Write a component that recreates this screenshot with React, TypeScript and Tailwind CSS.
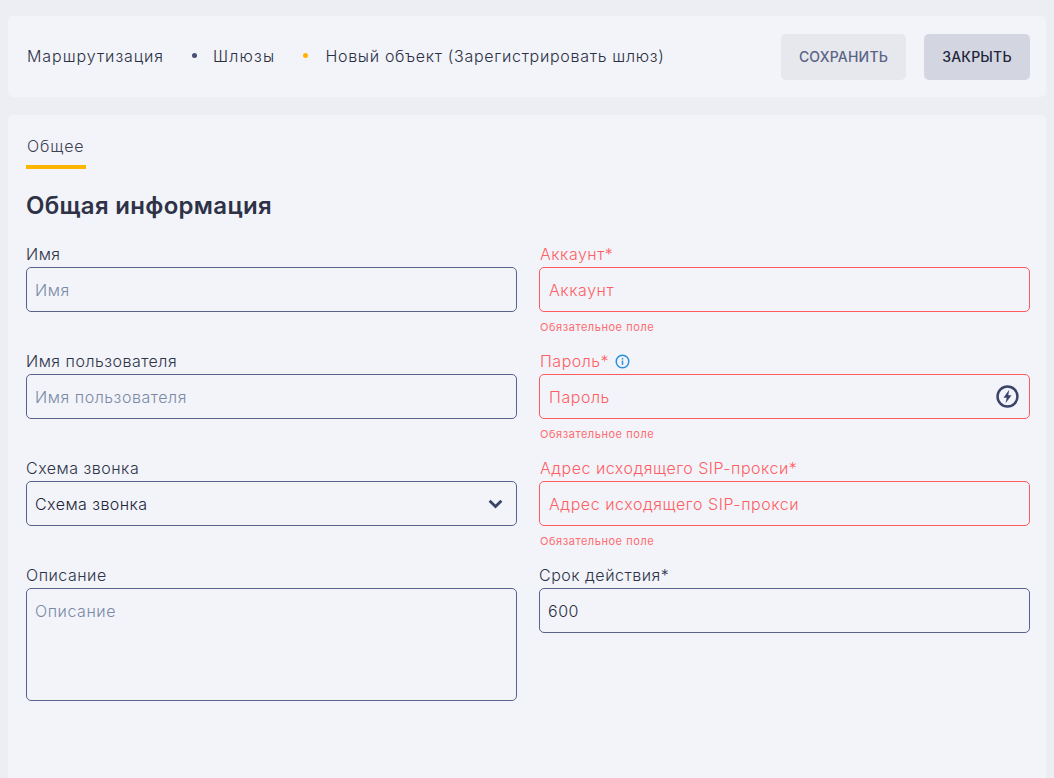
const FONT = "font-['Inter',sans-serif]";

/** Label + control wrapper shared by every form cell. */
function Field({ label, error, hint, children }: { label: string; error?: boolean; hint?: boolean; children: React.ReactNode }) {
  return (
    <div className="h-[107px]">
      <div className={`flex h-[20px] items-center gap-[6px] text-[16px] leading-[20px] font-light tracking-[0.5px] ${error ? 'pl-[1px] text-[#ff5f64]' : 'text-[#2f3348]'}`}>
        {label}
        {hint && (
          <svg viewBox="0 0 16 16" className="size-[15px]" fill="none">
            <circle cx="8" cy="8" r="6.7" stroke="#2b8fdc" strokeWidth="1.6" />
            <rect x="7.2" y="7" width="1.6" height="4.6" fill="#2b8fdc" />
            <rect x="7.2" y="4.3" width="1.6" height="1.6" fill="#2b8fdc" />
          </svg>
        )}
      </div>
      <div className="mt-[3px]">{children}</div>
      {error && <div className="mt-[8px] pl-[1px] text-[11px] leading-[14px] tracking-[0.55px] text-[#ff6b70]">Обязательное поле</div>}
    </div>
  );
}

function TextInput({ placeholder, error, value }: { placeholder: string; error?: boolean; value?: string }) {
  return (
    <input
      placeholder={placeholder}
      defaultValue={value}
      className={`h-[45px] w-full rounded-[5px] border bg-transparent px-[8px] text-[16px] font-light tracking-[0.55px] text-[#2c3044] outline-none ${
        error ? 'border-[#ff5a5f] pl-[9px] placeholder:text-[#ff5f64]' : 'border-[#58628c] placeholder:text-[#7a8aa6]'
      }`}
    />
  );
}

export default function App() {
  return (
    <div className={`${FONT} h-[778px] overflow-hidden bg-[#eceef3] px-[8px] pt-[16px]`}>
      <div className="flex h-[81px] items-center justify-between rounded-[5px] bg-[#f2f4f9] pl-[19px] pr-[16px]">
        <div className="flex items-center pb-[2px] text-[16px] font-light tracking-[0.7px] text-[#2c3044]">
          <span className="tracking-[0.95px]">Маршрутизация</span>
          <span className="ml-[28px] mr-[16px] size-[5px] rounded-full bg-[#4a5070]" />
          <span className="tracking-[1.2px]">Шлюзы</span>
          <span className="ml-[28px] mr-[17px] size-[5px] rounded-full bg-[#ffb400]" />
          <span>Новый объект (Зарегистрировать шлюз)</span>
        </div>
        <div className="flex gap-[18px] text-[14px] font-medium tracking-[0.2px]">
          <button className="h-[46px] w-[125px] rounded-[5px] bg-[#e7e8ee] text-[#5a6484]">СОХРАНИТЬ</button>
          <button className="h-[46px] w-[106px] rounded-[5px] bg-[#d3d6e1] text-[#23263a]">ЗАКРЫТЬ</button>
        </div>
      </div>

      <div className="mt-[18px] h-[700px] rounded-[5px] bg-[#f2f4f9] pl-[18px] pr-[16px] pt-[19px]">
        <div className="inline-block border-b-[4px] border-[#ffb400] px-[1px] pb-[9px] text-[16px] font-light leading-[20px] tracking-[0.9px] text-[#3f4256]">Общее</div>
        <h1 className="mt-[22px] text-[24px] font-semibold leading-[30px] tracking-[0.3px] text-[#2e3247]">Общая информация</h1>

        <div className="mt-[23px] grid grid-cols-2 gap-x-[22px]">
          <Field label="Имя"><TextInput placeholder="Имя" /></Field>
          <Field label="Аккаунт*" error><TextInput placeholder="Аккаунт" error /></Field>
          <Field label="Имя пользователя"><TextInput placeholder="Имя пользователя" /></Field>
          <Field label="Пароль*" error hint>
            <div className="relative">
              <TextInput placeholder="Пароль" error />
              <svg viewBox="0 0 24 24" className="absolute right-[11px] top-[11px] size-[23px]" fill="none">
                <circle cx="12" cy="12" r="10.4" stroke="#3b4468" strokeWidth="2.6" />
                <path d="M13.8 5 7.8 13.2h3.4L10 19l6.2-8.4h-3.4z" fill="#3b4468" />
              </svg>
            </div>
          </Field>
          <Field label="Схема звонка">
            <div className="flex h-[45px] items-center justify-between rounded-[5px] border border-[#58628c] pl-[8px] pr-[13px] text-[16px] font-light tracking-[0.45px] text-[#23263a]">
              Схема звонка
              <svg viewBox="0 0 15 10" className="h-[10px] w-[15px]" fill="none">
                <path d="M1.6 1.8 7.5 7.6l5.9-5.8" stroke="#3b4468" strokeWidth="2.8" />
              </svg>
            </div>
          </Field>
          <Field label="Адрес исходящего SIP-прокси*" error><TextInput placeholder="Адрес исходящего SIP-прокси" error /></Field>
          <Field label="Описание">
            <textarea
              placeholder="Описание"
              className="block h-[113px] w-full resize-none rounded-[5px] border border-[#58628c] bg-transparent px-[8px] py-[10px] text-[16px] font-light tracking-[0.55px] outline-none placeholder:text-[#7a8aa6]"
            />
          </Field>
          <Field label="Срок действия*"><TextInput placeholder="" value="600" /></Field>
        </div>
      </div>
    </div>
  );
}
